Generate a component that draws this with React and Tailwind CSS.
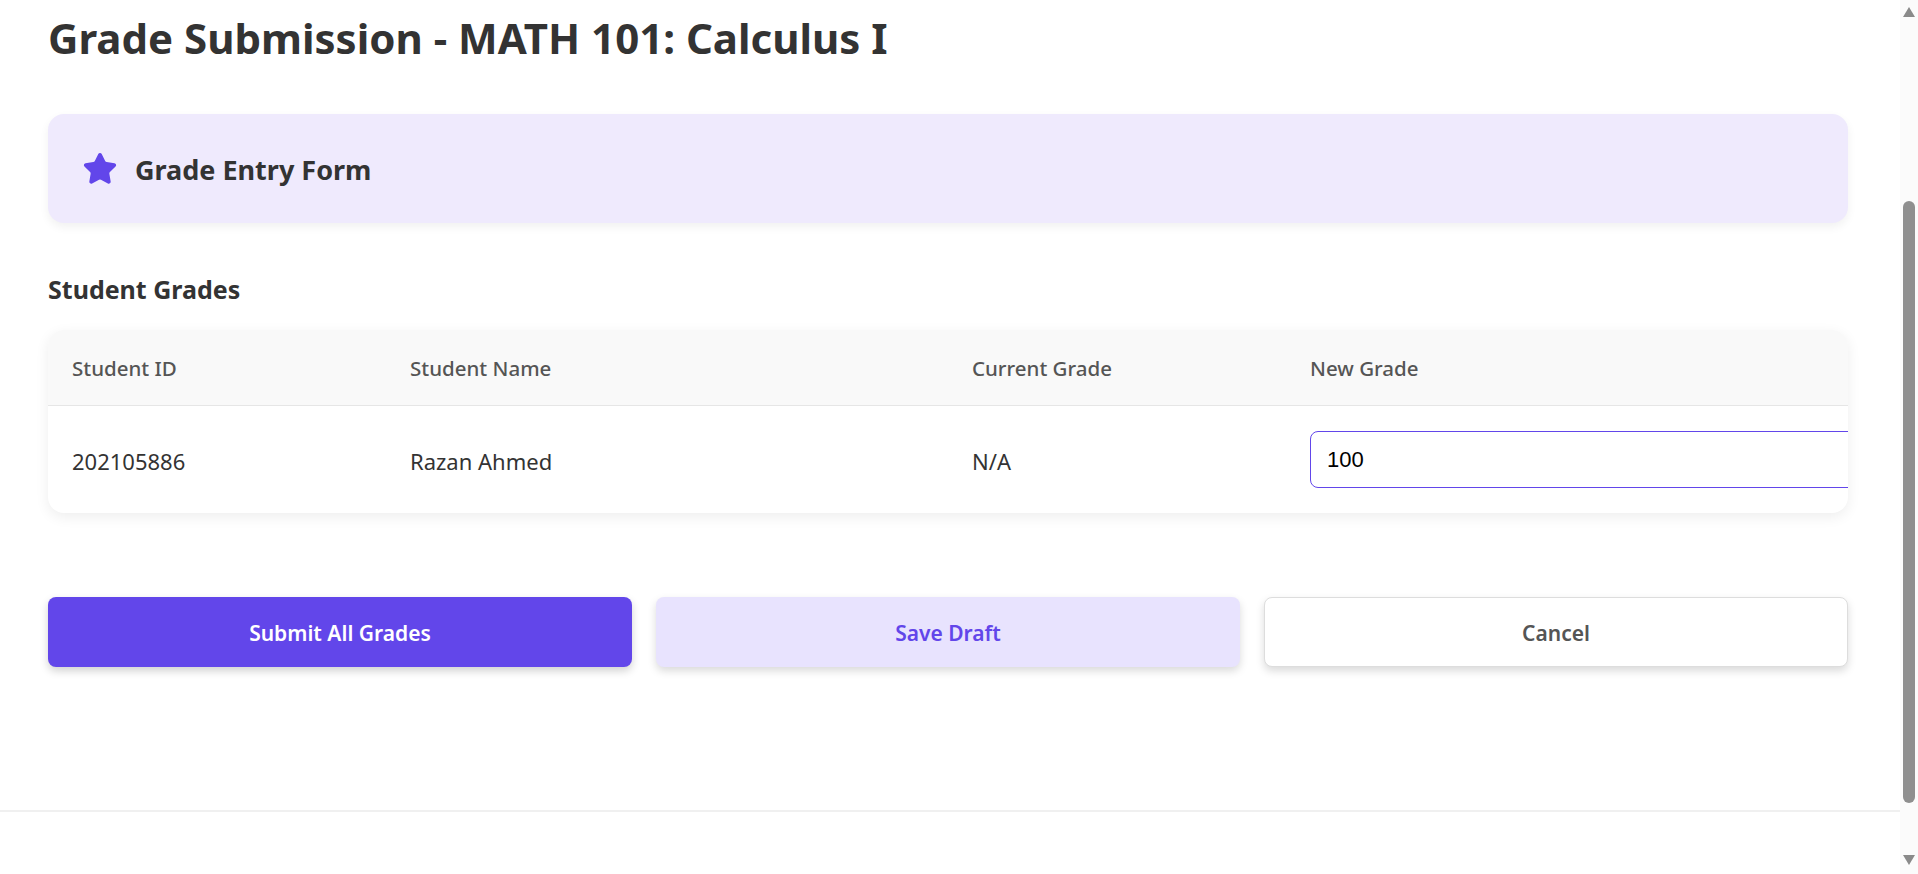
import React from 'react';
import { Star } from 'lucide-react';

const columns = ['Student ID', 'Student Name', 'Current Grade', 'New Grade'];

function Scrollbar() {
  return (
    <div className="w-[18px] shrink-0 bg-[#fbfbfb] flex flex-col items-center">
      <div className="h-[7px]" />
      <div className="w-0 h-0 border-l-[6px] border-r-[6px] border-b-[10px] border-l-transparent border-r-transparent border-b-[#8a8a8a]" />
      <div className="flex-1 w-full flex flex-col items-center pt-[184px] pb-[52px]">
        <div className="w-[12px] flex-1 rounded-full bg-[#8f8f8f]" />
      </div>
      <div className="w-0 h-0 border-l-[6px] border-r-[6px] border-t-[10px] border-l-transparent border-r-transparent border-t-[#8a8a8a]" />
      <div className="h-[9px]" />
    </div>
  );
}

export default function App() {
  return (
    <div
      className="flex h-screen overflow-hidden bg-white text-[#333]"
      style={{ fontFamily: '"Noto Sans", "Open Sans", sans-serif' }}
    >
      <div className="flex-1 flex flex-col min-w-0">
        <main className="h-[810px] shrink-0 pl-12 pr-[52px] pt-[13px]">
          <h1 className="text-[42px] leading-[50px] font-bold text-[#333]">
            Grade Submission - MATH 101: Calculus I
          </h1>

          <div className="mt-[51px] h-[109px] rounded-2xl bg-[#efeafd] shadow-[0_4px_10px_rgba(0,0,0,0.06)] flex items-center pl-[34px] gap-[17px]">
            <Star size={36} strokeWidth={1.5} className="text-[#6246ea]" fill="#6246ea" />
            <h2 className="pt-[2px] text-[27px] leading-9 font-bold text-[#333]">Grade Entry Form</h2>
          </div>

          <h3 className="mt-[48px] text-[25px] leading-[36px] font-bold text-[#333]">Student Grades</h3>

          <div className="mt-[23px] rounded-2xl bg-white overflow-hidden shadow-[0_4px_14px_rgba(0,0,0,0.07)]">
            <div className="grid grid-cols-[338px_562px_338px_562px] h-[76px] items-center pt-[2px] bg-[#f9f9f9] border-b border-[#e6e6e6]">
              {columns.map((c) => (
                <div key={c} className="px-6 text-[20.5px] font-medium text-[#555]">
                  {c}
                </div>
              ))}
            </div>
            <div className="grid grid-cols-[338px_562px_338px_562px] h-[107px] items-center text-[22px] text-[#333]">
              <div className="px-6 pt-[4px]">202105886</div>
              <div className="px-6 pt-[4px]">Razan Ahmed</div>
              <div className="px-6 pt-[4px]">N/A</div>
              <div className="pl-6 min-w-0">
                <input
                  type="text"
                  defaultValue="100"
                  className="w-[548px] h-[57px] rounded-lg border border-[#6246ea] px-4 text-[22px] text-black outline-none"
                  style={{ fontFamily: '"Liberation Sans", Arial, sans-serif' }}
                />
              </div>
            </div>
          </div>

          <div className="mt-[84px] grid grid-cols-3 gap-6">
            <button className="h-[70px] pt-[3px] rounded-lg bg-[#6246ea] text-white text-[21px] font-semibold shadow-[0_4px_8px_rgba(0,0,0,0.18)]">
              Submit All Grades
            </button>
            <button className="h-[70px] pt-[3px] rounded-lg bg-[#e8e3fe] text-[#6246ea] text-[21px] font-semibold shadow-[0_4px_8px_rgba(0,0,0,0.15)]">
              Save Draft
            </button>
            <button className="h-[70px] pt-[3px] rounded-lg bg-white border border-[#dddddd] text-[#555] text-[21px] font-semibold shadow-[0_4px_8px_rgba(0,0,0,0.15)]">
              Cancel
            </button>
          </div>
        </main>
        <footer className="flex-1 border-t-2 border-[#f0f0f0] bg-white" />
      </div>
      <Scrollbar />
    </div>
  );
}
